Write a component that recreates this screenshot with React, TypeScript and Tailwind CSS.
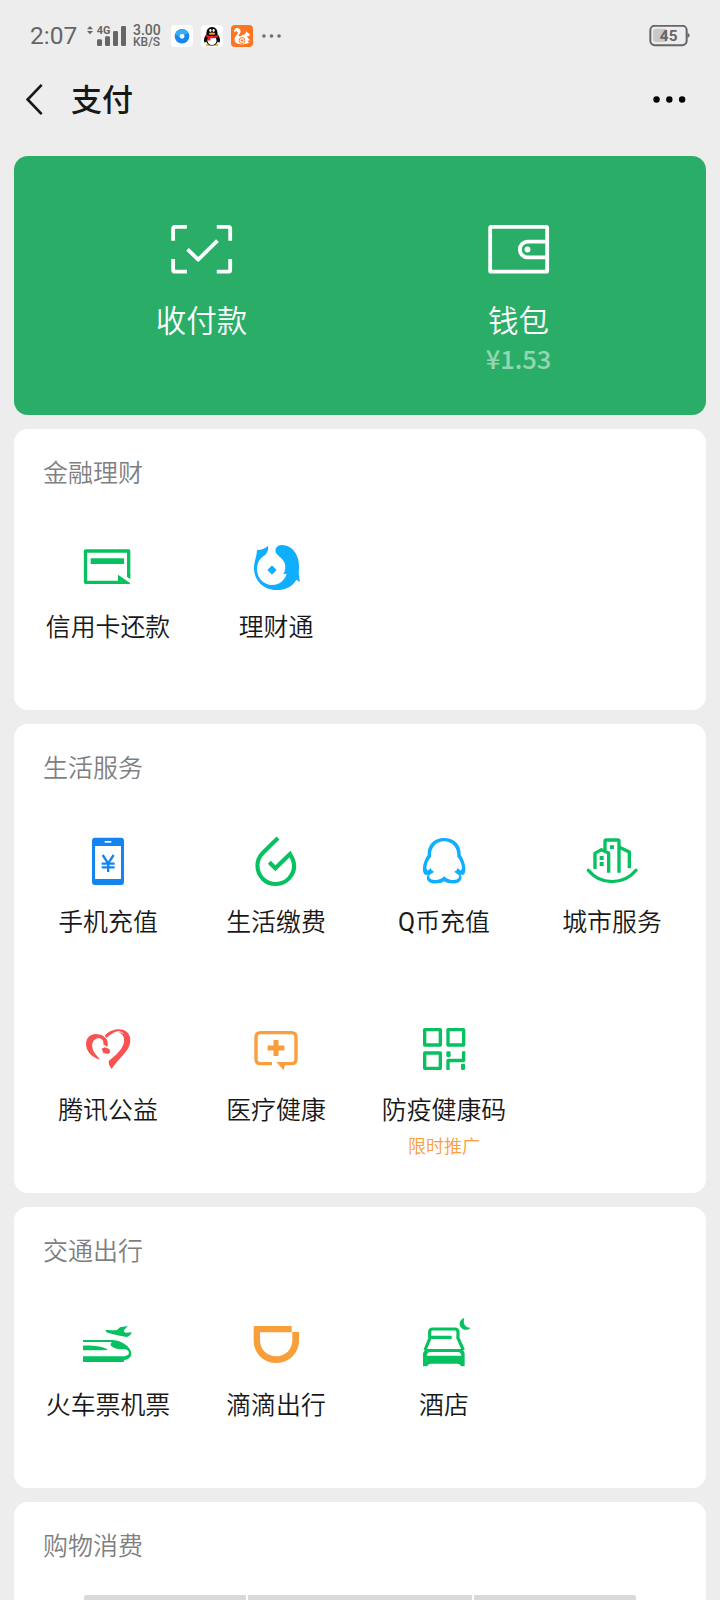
import type { ReactNode } from "react";
import clsx from "clsx";

type Service = {
    name: string;
    icon: ReactNode;
    tip?: string;
};

const GREEN = "#07c160";
const BLUE = "#10aeff";
const ORANGE = "#fa9d3b";

function Icon({ box, children }: { box: string; children: ReactNode }) {
    return (
        <svg viewBox={box} className="size-[60px]" fill="none">
            {children}
        </svg>
    );
}

const finance: Service[] = [
    {
        name: "信用卡还款",
        icon: (
            <Icon box="234 411 180 180">
                <path d="M386 528V453H256.500V547H362" stroke={GREEN} strokeWidth="10" strokeLinejoin="round" />
                <path d="M272 475h100v17h-100z" fill={GREEN} />
                <path d="M354 524l36 25v3h-36z" fill={GREEN} />
                <path d="M381 524v7l10 6v-13z" fill={GREEN} />
            </Icon>
        ),
    },
    {
        name: "理财通",
        icon: (
            <Icon box="738 411 180 180">
                <path
                    d="M771 450C784 450 795 446 804 437C806 452 801 461 791 468C777 478 770 492 771 511C773 537 792 555 816 555C838 555 854 541 860 521L850 523C856 512 858 500 854 489C849 477 838 471 831 463C821 451 828 435 845 435C877 436 898 464 897 501C896 517 896 531 900 546L889 539C879 559 856 570 829 570C792 570 762 543 762 504C762 485 770 472 771 450Z"
                    fill={BLUE}
                />
                <path d="M816 499l11 11-11 11-11-11z" fill={BLUE} stroke={BLUE} strokeWidth="4" strokeLinejoin="round" />
            </Icon>
        ),
    },
];

const life: Service[] = [
    {
        name: "手机充值",
        icon: (
            <Icon box="54 36 180 180">
                <rect x="96" y="53" width="96" height="142" rx="9" fill="#1485ee" />
                <path d="M105 78h78v99h-78z" fill="#fff" />
                <path d="M134 63h20v5h-20z" fill="#fff" />
                <path d="M128 105l16.500 25L161 105M144.500 128v28M125 131h39M125 142h39" stroke="#1485ee" strokeWidth="7" />
            </Icon>
        ),
    },
    {
        name: "生活缴费",
        icon: (
            <Icon box="558 36 180 180">
                <path
                    d="M654 54L609 98C585 121 589 156 608 176C630 198 668 197 688 174C706 153 706 127 690 102L646 145L628 127"
                    stroke={GREEN}
                    strokeWidth="12.500"
                />
            </Icon>
        ),
    },
    {
        name: "Q币充值",
        icon: (
            <Icon box="102 36 180 180">
                <path
                    d="M143 105C141 75 162 54 192.500 54C223 54 244 75 242 105C251 118 258 138 256 153C254 165 247 168 241 163C249 174 243 187 228 190C214 192 201 190 192.500 184C184 190 171 192 157 190C142 187 136 174 144 163C138 168 131 165 129 153C127 138 134 118 143 105ZM153 110C145 119 139 133 139 144L143 152L152 144L155 151L161 154C160 161 151 161 147 168C148 178 159 181 169 180C179 178 186 176 192.500 169C199 176 206 178 216 180C226 181 237 178 238 168C234 161 225 161 224 154L230 151L233 144L242 152L246 144C246 133 240 119 232 110C234 84 217 64 192.500 64C168 64 151 84 153 110Z"
                    fill={BLUE}
                    fillRule="evenodd"
                />
            </Icon>
        ),
    },
    {
        name: "城市服务",
        icon: (
            <Icon box="606 36 180 180">
                <g stroke={GREEN} strokeWidth="10" strokeLinejoin="round">
                    <path d="M645 147V100L664 89L686 99V158" />
                    <path d="M675 90V64Q675 60 679 60H713Q717 60 717 64V158" />
                    <path d="M717 81L748 96V145" />
                    <path d="M625 151C660 196 732 196 768 151" strokeLinecap="round" />
                </g>
                <path d="M690 76h12v11h-12zM659 108h12v12h-12zM659 126h12v12h-12z" fill={GREEN} />
            </Icon>
        ),
    },
    {
        name: "腾讯公益",
        icon: (
            <Icon box="54 30 180 180">
                <path
                    d="M120 149C96 142 78 124 78 101C79 82 93 71 109 72C121 73 129 76 136 83C144 91 145 101 142 111L130 103C132 91 124 84 115 85C102 86 95 97 97 112C99 127 110 136 120 149Z"
                    fill="#fa5151"
                />
                <path
                    d="M134 77C149 59 175 53 193 61C210 69 215 89 208 107C198 132 172 149 155 177L147 164L146 153C166 137 188 119 192 96C194 80 187 70 176 68L181 64C165 65 151 72 140 84Z"
                    fill="#fa5151"
                />
                <path d="M125 116l9-4 14 5 3 9-6 6-15-3z" fill="#fa5151" />
                <path d="M160 69C171 64 183 65 190 70" stroke="#fff" strokeWidth="2" />
            </Icon>
        ),
    },
    {
        name: "医疗健康",
        icon: (
            <Icon box="558 30 180 180">
                <path
                    d="M636 161H602Q588 161 588 147V82Q588 68 602 68H694Q708 68 708 82V147Q708 161 694 161H660"
                    stroke={ORANGE}
                    strokeWidth="10"
                />
                <path d="M649 156h28l-6 25z" fill={ORANGE} />
                <path d="M648 90v48M623 114h50" stroke={ORANGE} strokeWidth="15" />
            </Icon>
        ),
    },
    {
        name: "防疫健康码",
        tip: "限时推广",
        icon: (
            <Icon box="132 30 180 180">
                <g stroke={GREEN} strokeWidth="10" strokeLinejoin="round">
                    <path d="M164 59h47v46h-47zM234 59h47v46h-47zM164 129h47v46h-47z" />
                    <path d="M234 180V151.500H281V124" />
                </g>
                <rect x="229" y="124" width="13" height="17" rx="4" fill={GREEN} />
                <rect x="273" y="161" width="12" height="19" rx="4" fill={GREEN} />
            </Icon>
        ),
    },
];

const travel: Service[] = [
    {
        name: "火车票机票",
        icon: (
            <Icon box="114 45 180 180">
                <path
                    d="M129 120H219C247 122 274 142 274 161C274 173 263 178 253 180L251 186H129V169H243C257 169 267 166 267 158C266 153 262 149 256 148C241 148 223 147 213 137C210 132 213 128 217 126H129Z"
                    fill={GREEN}
                />
                <path d="M129 137C158 136 189 139 204 150C180 151 154 151 129 151Z" fill={GREEN} />
                <path
                    d="M198 90C212 89 222 92 231 90L240 82L263 78L252 91C250 94 252 97 257 98L275 97C274 103 269 109 260 111C240 108 213 102 200 97C197 95 197 92 198 90Z"
                    fill={GREEN}
                />
            </Icon>
        ),
    },
    {
        name: "滴滴出行",
        icon: (
            <Icon box="618 45 180 180">
                <path
                    d="M645 78H755V96H777V121C777 160 747 189 709 189C671 189 641 160 641 121V82Q641 78 645 78ZM660 97V121C660 149 682 169 709 169C736 169 757 148 757 121V97Z"
                    fill={ORANGE}
                    fillRule="evenodd"
                />
            </Icon>
        ),
    },
    {
        name: "酒店",
        icon: (
            <Icon box="42 45 180 180">
                <path
                    d="M89 112V96Q89 87 98 87H165Q174 87 174 96V112M155 112H91L75 150M172 110L190 150"
                    stroke={GREEN}
                    strokeWidth="9.500"
                />
                <path
                    d="M76 147H188L194 160V199H183Q181 191 172 191H93Q84 191 82 199H69V160ZM88 156Q80 159 80 167H184Q184 159 175 156Z"
                    fill={GREEN}
                    fillRule="evenodd"
                />
                <path d="M193 53C176 60 175 78 187 86C196 92 207 90 211 83C195 83 188 70 193 53Z" fill={GREEN} />
            </Icon>
        ),
    },
];

function StatusBar() {
    return (
        <div className="flex h-[72px] items-center pl-[30px] pr-[30px] font-['Roboto',sans-serif] text-[#666]">
            <span className="w-[56px] pt-px text-[24.500px] leading-none">2:07</span>
            <svg viewBox="258 72 126 72" className="h-6 w-[42px]" fill="#666">
                <path d="M270 78l9 10h-18zM270 103l9-10h-18z" />
                <text x="290" y="102" fontSize="30" fontWeight="700" textLength="41" lengthAdjust="spacingAndGlyphs">
                    4G
                </text>
                <rect x="291" y="118" width="15" height="20" rx="4" />
                <rect x="315" y="109" width="15" height="29" rx="4" />
                <rect x="339" y="93" width="15" height="45" rx="4" />
                <rect x="363" y="78" width="15" height="60" rx="4" />
            </svg>
            <div className="ml-[5px] flex w-[30px] flex-col items-start text-[12px] font-medium leading-[12px]">
                <span className="text-[14px]">3.00</span>
                <span>KB/S</span>
            </div>
            <div className="ml-2 flex items-center gap-2">
                <svg viewBox="512 73 68 68" className="size-[22px]">
                    <rect x="512" y="73" width="68" height="68" rx="12" fill="#fdfdfd" />
                    <circle cx="546" cy="108" r="22.500" fill="#1687f0" />
                    <path d="M524 104A22.500 22.500 0 0 1 566 98L546 108Z" fill="#32aefb" />
                    <circle cx="546" cy="108" r="7.500" fill="#fff" />
                </svg>
                <svg viewBox="602 73 68 68" className="size-[22px]">
                    <rect x="602" y="73" width="68" height="68" rx="12" fill="#fdfdfd" />
                    <path d="M618 132h36v6h-36z" fill="#f7b516" />
                    <path d="M636 79C647 79 654 88 653 101C660 110 663 121 659 128L654 124C651 133 645 136 636 136S621 133 618 124L613 128C609 121 612 110 619 101C618 88 625 79 636 79Z" fill="#050505" />
                    <ellipse cx="636" cy="121" rx="14" ry="14" fill="#fff" />
                    <ellipse cx="631" cy="90" rx="3.500" ry="4.500" fill="#fff" />
                    <ellipse cx="641" cy="90" rx="3.500" ry="4.500" fill="#fff" />
                    <ellipse cx="636" cy="100" rx="10" ry="3.500" fill="#f9a01b" />
                    <path d="M618 104Q636 111 654 104L655 111Q643 116 631 113V121H623V111L617 110Z" fill="#eb1923" />
                </svg>
                <svg viewBox="692 73 68 68" className="size-[22px]">
                    <rect x="692" y="73" width="68" height="68" rx="12" fill="#ff7420" />
                    <path
                        d="M701 96C701 85 708 80 716 84C724 88 723 97 717 102C714 106 717 109 722 108C727 102 733 104 737 99L739 92L744 98C751 100 753 105 747 107L741 109L751 120L742 122L748 128C739 134 712 134 706 126C700 119 705 109 709 105C713 100 715 95 711 93C707 91 704 95 701 96Z"
                        fill="#fff"
                    />
                    <circle cx="726" cy="121" r="9" fill="none" stroke="#ff7420" strokeWidth="3" />
                    <path d="M722 118h8v6h-8z" fill="#ff7420" />
                </svg>
                <svg viewBox="787 99 58 18" className="ml-[1px] h-[6px] w-[19px]" fill="#6e6e6e">
                    <circle cx="793" cy="108" r="5.500" />
                    <circle cx="816" cy="108" r="5.500" />
                    <circle cx="839" cy="108" r="5.500" />
                </svg>
            </div>
            <svg viewBox="269 75 122 66" className="ml-auto h-[22px] w-[41px]" fill="#666">
                <rect x="272.500" y="77.500" width="109" height="58" rx="13" fill="none" stroke="#666" strokeWidth="6" />
                <path d="M384 98q6 2 6 8t-6 8z" />
                <rect x="281" y="86" width="42" height="40" rx="7" fill="#c8c8c8" />
                <text x="301" y="123" fontSize="46" fontWeight="700" textLength="53" lengthAdjust="spacingAndGlyphs">
                    45
                </text>
            </svg>
        </div>
    );
}

function NavBar() {
    return (
        <div className="flex h-[84px] items-center pb-[30px] pl-[26px] pr-[34px]">
            <svg viewBox="78 248 54 98" className="h-[33px] w-[18px]" fill="none">
                <path d="M125 253L83 297L125 341" stroke="#181818" strokeWidth="8" />
            </svg>
            <h1 className="ml-[27px] mt-[3px] text-[31px] font-medium leading-none text-[#181818]">支付</h1>
            <svg viewBox="280 287 98 20" className="ml-auto h-[7px] w-[33px]" fill="#000">
                <circle cx="290.500" cy="297" r="9.500" />
                <circle cx="328.500" cy="297" r="9.500" />
                <circle cx="366.500" cy="297" r="9.500" />
            </svg>
        </div>
    );
}

function Section({ title, items }: { title: string; items: Service[] }) {
    return (
        <section className="rounded-[14px] bg-white px-[10px] pb-px">
            <h2 className="h-[92px] pl-[19px] pt-[27px] text-[25px] font-[350] leading-[36px] text-[#7f7f7f]">{title}</h2>
            <div className="grid grid-cols-4">
                {items.map((item) => (
                    <div key={item.name} className="flex h-[188px] flex-col items-center pt-4">
                        {item.icon}
                        <span
                            className={clsx(
                                "mt-[13px] whitespace-nowrap text-[24.900px] font-[350] leading-[36px] text-[#181818]",
                                // latin initials look too thin at 350
                                /^[A-Z]/.test(item.name) && "first-letter:font-normal"
                            )}
                        >
                            {item.name}
                        </span>
                        {item.tip && (
                            <span className="mt-1.5 text-[18px] font-[350] leading-6 text-[#fa9d3b]">{item.tip}</span>
                        )}
                    </div>
                ))}
            </div>
        </section>
    );
}

export default function App() {
    return (
        <div className="h-[1600px] w-[720px] overflow-hidden bg-[#ededed] font-['Roboto','Noto_Sans_CJK_SC',sans-serif]">
            <StatusBar />
            <NavBar />
            <main className="flex flex-col gap-[14px] px-[14px]">
                <div className="grid h-[259px] grid-cols-2 rounded-[14px] bg-[#2aae67] px-[29px] pt-[69px] text-white">
                    <div className="flex flex-col items-center">
                        <svg viewBox="122 75 187 150" className="h-[50px] w-[62px]" fill="none" stroke="#fff" strokeWidth="11.500">
                            <path d="M128.500 122V86Q128.500 80.500 134 80.500H170M260 80.500H295Q300.500 80.500 300.500 86V122M300.500 177V210Q300.500 215.500 295 215.500H260M170 215.500H134Q128.500 215.500 128.500 210V177" />
                            <path d="M172 148L204 179L262 122" strokeLinejoin="round" />
                        </svg>
                        <span className="mt-[27px] text-[30.500px] font-[350] leading-[40px]">收付款</span>
                    </div>
                    <div className="flex flex-col items-center">
                        <svg viewBox="143 75 187 150" className="h-[50px] w-[62px]" fill="none" stroke="#fff" strokeWidth="11.500">
                            <rect x="149.500" y="80.500" width="172" height="135" rx="3" />
                            <path d="M321 124.500H263A24 24 0 0 0 263 172.500H321" />
                            <circle cx="262" cy="148.500" r="9" fill="#fff" stroke="none" />
                        </svg>
                        <span className="mt-[27px] text-[30.500px] font-[350] leading-[40px]">钱包</span>
                        <span className="-mt-[3px] font-['Noto_Sans_CJK_SC',sans-serif] text-[25.500px] font-medium leading-[38px] text-white/50">
                            ¥1.53
                        </span>
                    </div>
                </div>
                <Section title="金融理财" items={finance} />
                <Section title="生活服务" items={life} />
                <Section title="交通出行" items={travel} />
                <section className="h-[120px] rounded-[14px] bg-white">
                    <h2 className="h-[93px] pl-[29px] pt-[27px] text-[25px] font-[350] leading-[36px] text-[#7f7f7f]">
                        购物消费
                    </h2>
                    <div className="flex gap-[2px] pl-[70px]">
                        <div className="h-5 w-[162px] rounded-tl-[3px] bg-[#d9d9d9]" />
                        <div className="h-5 w-[224px] bg-[#d9d9d9]" />
                        <div className="h-5 w-[162px] rounded-tr-[3px] bg-[#d9d9d9]" />
                    </div>
                </section>
            </main>
        </div>
    );
}
